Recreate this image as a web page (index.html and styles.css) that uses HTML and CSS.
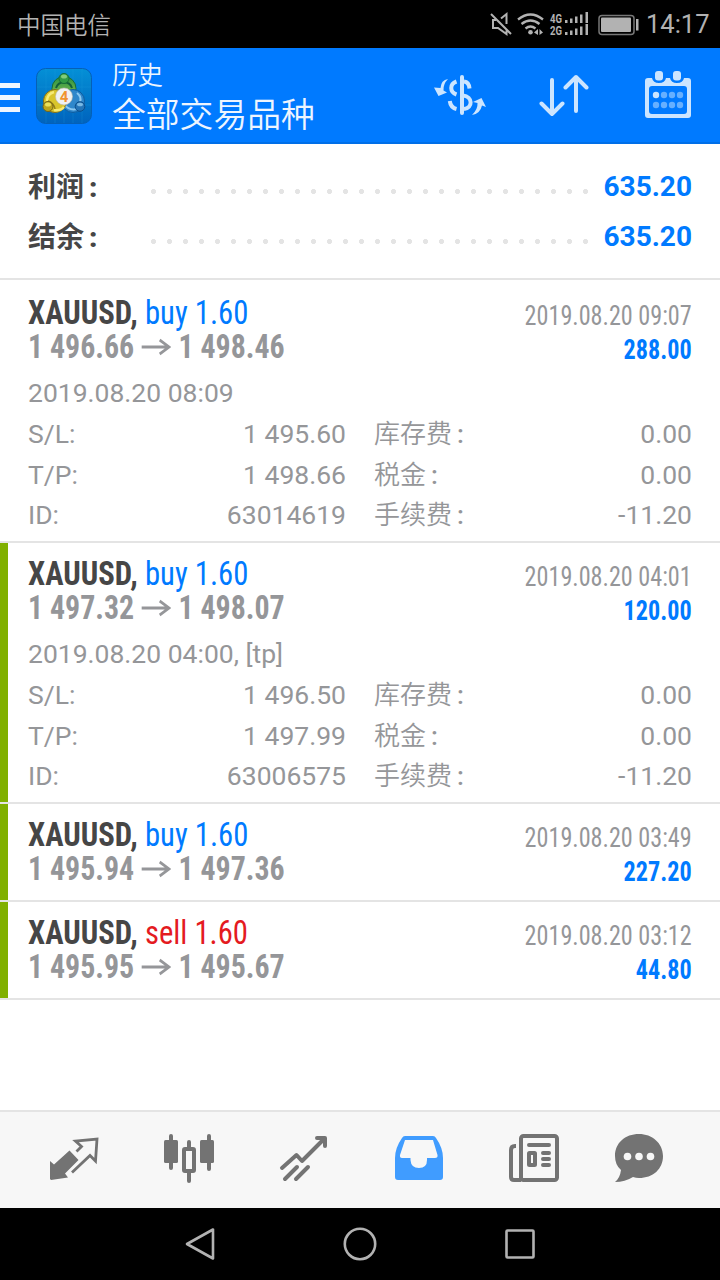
FILE: index.html
```html
<!DOCTYPE html>
<html lang="zh-CN">
<head>
    <meta charset="UTF-8">
    <meta name="viewport" content="width=device-width, initial-scale=1.0">
    <title>历史</title>
    <link rel="stylesheet" href="styles.css">
</head>
<body>
    <svg class="sprite" width="0" height="0">
        <symbol id="arrow" viewBox="0 0 32 18">
            <path d="M0 9H30.500M20 2L30.500 9L20 16" fill="none" stroke="currentColor" stroke-width="2.800"/>
        </symbol>
    </svg>

    <div class="status-bar">
        <span class="carrier">中国电信</span>
        <div class="status-icons">
            <svg width="150" height="48" viewBox="490 0 150 48">
                <!-- muted speaker -->
                <g fill="none" stroke="#b2b2b2" stroke-width="2">
                    <path d="M491 14L511 34M501 18.500L506.500 14V24M496 20H493V28H498L506.500 34V30.500"/>
                </g>
                <!-- wifi -->
                <g fill="none" stroke="#b2b2b2" stroke-width="2.300">
                    <path d="M518 19.500Q530.500 9.500 543 19.500M521.500 24Q530.500 17 539.500 24M525.500 28.500Q530.500 24.500 535.500 28.500"/>
                </g>
                <circle cx="530.500" cy="32.200" r="2.300" fill="#b2b2b2"/>
                <path d="M534 32.500L538 29V35ZM543 32.500L539.500 29V35Z" fill="#b2b2b2"/>
                <text class="net" x="550" y="22.800" textLength="12" lengthAdjust="spacingAndGlyphs">4G</text>
                <text class="net" x="550" y="35" textLength="12" lengthAdjust="spacingAndGlyphs">2G</text>
                <!-- signal levels -->
                <g fill="#b2b2b2">
                    <path d="M565 20h2.500v3h-2.500zM570 18.500h2.500v4.500h-2.500zM575 16.500h2.500v6.500h-2.500zM580 14.500h2.500v8.500h-2.500zM585.500 12h2.500v11h-2.500z"/>
                    <path d="M565 32h2.500v3h-2.500zM570 30.500h2.500v4.500h-2.500zM575 28.500h2.500v6.500h-2.500zM580 26.500h2.500v8.500h-2.500zM585.500 24h2.500v11h-2.500z"/>
                </g>
                <!-- battery -->
                <rect x="599" y="15.500" width="35" height="19" rx="3" fill="none" stroke="#777" stroke-width="1.500"/>
                <rect x="601" y="17.500" width="30" height="14.500" rx="1" fill="#b2b2b2"/>
                <path d="M636 19h2.500v11.500h-2.500z" fill="#b2b2b2"/>
            </svg>
            <span class="clock">14:17</span>
        </div>
    </div>

    <header class="app-bar">
        <svg class="menu-icon" width="20" height="29" viewBox="0 0 20 29">
            <path d="M0 2.500H20M0 14.500H20M0 26.500H20" stroke="#edf5ff" stroke-width="5"/>
        </svg>
        <svg class="logo" width="56" height="56" viewBox="0 0 56 56">
            <defs>
                <linearGradient id="tile" x1="0" y1="0" x2="0" y2="1">
                    <stop offset="0" stop-color="#0490d6"/>
                    <stop offset="1" stop-color="#0063bd"/>
                </linearGradient>
                <linearGradient id="green" x1="0" y1="0" x2="0" y2="1">
                    <stop offset="0" stop-color="#2c9140"/>
                    <stop offset="1" stop-color="#8cc653"/>
                </linearGradient>
            </defs>
            <rect x="0.500" y="0.500" width="55" height="55" rx="9" fill="url(#tile)" stroke="#0560b6"/>
            <path d="M10 1V55M19 1V55M28 1V55M37 1V55M46 1V55M1 19H55M1 37H55" stroke="#1c9ddd" stroke-width="0.500" opacity="0.500"/>
            <circle cx="28" cy="20.500" r="12" fill="url(#green)" stroke="#166b38"/>
            <path d="M20 20A8.500 8.500 0 0 1 36 20" fill="none" stroke="#12603a" stroke-width="2"/>
            <circle cx="37" cy="33" r="11.500" fill="#2f87cb" stroke="#0c5ca0"/>
            <path d="M41 25Q46 29 44 34M28 36Q33 43 41 41" fill="none" stroke="#8cc8f0" stroke-width="2"/>
            <circle cx="19" cy="33" r="11.500" fill="#d9c52b" stroke="#806b19"/>
            <path d="M11 33Q11 26 18 24M18 42Q25 43 28 39" fill="none" stroke="#f6ea74" stroke-width="2.500"/>
            <path d="M12 33Q18 35 19 41" fill="none" stroke="#94801a" stroke-width="1.500"/>
            <circle cx="28" cy="10.500" r="5" fill="#319b45" stroke="#176d36"/>
            <ellipse cx="28" cy="8.500" rx="3" ry="2" fill="#82cc79"/>
            <circle cx="12" cy="38.500" r="5" fill="#bda61c" stroke="#76651a"/>
            <ellipse cx="12" cy="36.500" rx="3" ry="2" fill="#ece15b"/>
            <circle cx="44" cy="38.500" r="4.800" fill="#2575b8" stroke="#0b4d8a"/>
            <ellipse cx="44" cy="36.500" rx="3" ry="1.800" fill="#79b9e4"/>
            <circle cx="28" cy="28.500" r="8.500" fill="#f0f1f1" stroke="#b9b9b0" stroke-width="0.600"/>
            <text class="logo-digit" x="28" y="34" text-anchor="middle">4</text>
        </svg>
        <div class="titles">
            <div class="title">历史</div>
            <div class="subtitle">全部交易品种</div>
        </div>
        <div class="actions">
            <svg width="54" height="44" viewBox="433 73 54 44">
                <g fill="none" stroke="#cce5ff">
                    <path d="M462 77V113" stroke-width="4" stroke-linecap="round"/>
                    <path d="M464 81.500Q469 82 469.500 88.500M463 95.500C473 96.500 473 108 464 109" stroke-width="4"/>
                    <path d="M456.500 81.500C449.500 84 449.500 92 456.500 94.500M449.800 101Q450.500 107.500 456.500 109" stroke-width="4"/>
                </g>
                <path d="M448 79Q441 80 440.500 88L434 87.500L438.500 96L447 92.500L443.500 90.500Q443 84 448 79Z" fill="#cce5ff"/>
                <path d="M472 115Q478 109 477.500 103L473 102L481.500 98L486 107L482 105.500Q480 114 472 115Z" fill="#cce5ff"/>
            </svg>
            <svg class="sort-icon" width="50" height="44" viewBox="539 73 50 44">
                <path d="M552 80V114M541.500 103.500L552 114L562.500 103.500M576 111V77M565.500 87.500L576 77L586.500 87.500" fill="none" stroke="#cce5ff" stroke-width="4" stroke-linecap="round" stroke-linejoin="round"/>
            </svg>
            <svg width="46" height="48" viewBox="645 71 46 48">
                <path d="M648 78H652Q653 83 659 83Q665 83 666 78H670Q671 83 677 83Q683 83 684 78H688Q691 78 691 81V115Q691 118 688 118H648Q645 118 645 115V81Q645 78 648 78ZM652 86Q649 86 649 89V111Q649 114 652 114H684Q687 114 687 111V89Q687 86 684 86Z" fill="#cce5ff" fill-rule="evenodd"/>
                <rect x="655" y="71" width="8" height="9.500" rx="3" fill="#cce5ff"/>
                <rect x="673" y="71" width="8" height="9.500" rx="3" fill="#cce5ff"/>
                <circle cx="656" cy="95" r="3.200" fill="#cce5ff"/>
                <g fill="#66b0ff">
                    <circle cx="664" cy="95" r="3.200"/>
                    <circle cx="672" cy="95" r="3.200"/>
                    <circle cx="680" cy="95" r="3.200"/>
                    <circle cx="656" cy="105" r="3.200"/>
                    <circle cx="664" cy="105" r="3.200"/>
                    <circle cx="672" cy="105" r="3.200"/>
                    <circle cx="680" cy="105" r="3.200"/>
                </g>
            </svg>
        </div>
    </header>

    <section class="summary">
        <div class="summary-row">
            <span class="summary-label">利润<i>:</i></span>
            <span class="dots"></span>
            <span class="summary-value">635.20</span>
        </div>
        <div class="summary-row">
            <span class="summary-label">结余<i>:</i></span>
            <span class="dots"></span>
            <span class="summary-value">635.20</span>
        </div>
    </section>

    <main class="deals">
        <article class="deal">
            <div class="deal-head">
                <div class="deal-left">
                    <div class="symbol">XAUUSD, <span class="buy">buy 1.60</span></div>
                    <div class="prices">1 496.66<svg class="arrow"><use href="#arrow"/></svg>1 498.46</div>
                </div>
                <div class="deal-right">
                    <div class="close-time">2019.08.20 09:07</div>
                    <div class="profit">288.00</div>
                </div>
            </div>
            <div class="open-time">2019.08.20 08:09</div>
            <div class="details">
                <span>S/L:</span><span class="num">1 495.60</span><span class="cn">库存费<i>:</i></span><span class="num">0.00</span>
                <span>T/P:</span><span class="num">1 498.66</span><span class="cn">税金<i>:</i></span><span class="num">0.00</span>
                <span>ID:</span><span class="num">63014619</span><span class="cn">手续费<i>:</i></span><span class="num">-11.20</span>
            </div>
        </article>

        <article class="deal tp">
            <div class="deal-head">
                <div class="deal-left">
                    <div class="symbol">XAUUSD, <span class="buy">buy 1.60</span></div>
                    <div class="prices">1 497.32<svg class="arrow"><use href="#arrow"/></svg>1 498.07</div>
                </div>
                <div class="deal-right">
                    <div class="close-time">2019.08.20 04:01</div>
                    <div class="profit">120.00</div>
                </div>
            </div>
            <div class="open-time">2019.08.20 04:00, [tp]</div>
            <div class="details">
                <span>S/L:</span><span class="num">1 496.50</span><span class="cn">库存费<i>:</i></span><span class="num">0.00</span>
                <span>T/P:</span><span class="num">1 497.99</span><span class="cn">税金<i>:</i></span><span class="num">0.00</span>
                <span>ID:</span><span class="num">63006575</span><span class="cn">手续费<i>:</i></span><span class="num">-11.20</span>
            </div>
        </article>

        <article class="deal tp">
            <div class="deal-head">
                <div class="deal-left">
                    <div class="symbol">XAUUSD, <span class="buy">buy 1.60</span></div>
                    <div class="prices">1 495.94<svg class="arrow"><use href="#arrow"/></svg>1 497.36</div>
                </div>
                <div class="deal-right">
                    <div class="close-time">2019.08.20 03:49</div>
                    <div class="profit">227.20</div>
                </div>
            </div>
        </article>

        <article class="deal tp">
            <div class="deal-head">
                <div class="deal-left">
                    <div class="symbol">XAUUSD, <span class="sell">sell 1.60</span></div>
                    <div class="prices">1 495.95<svg class="arrow"><use href="#arrow"/></svg>1 495.67</div>
                </div>
                <div class="deal-right">
                    <div class="close-time">2019.08.20 03:12</div>
                    <div class="profit">44.80</div>
                </div>
            </div>
        </article>
    </main>

    <nav class="tabs">
        <!-- quotes -->
        <svg width="50" height="50" viewBox="49 1133 50 50">
            <path d="M69.500 1150.500L78.500 1160L65 1173.500L68 1177.500L51 1180L50 1179V1161L54 1164.500Z" fill="#737373"/>
            <path d="M76.500 1151.500L81.500 1146.500L75.500 1141L97 1139L95.500 1161L90 1155.500L72 1172.500" fill="none" stroke="#737373" stroke-width="2.800"/>
        </svg>
        <!-- charts -->
        <svg width="50" height="50" viewBox="164 1133 50 50">
            <path d="M171 1136V1168M209 1136V1169M189 1142V1148M189 1172V1181" stroke="#737373" stroke-width="4" stroke-linecap="round"/>
            <rect x="164" y="1140" width="14" height="23" rx="1.500" fill="#737373"/>
            <rect x="200" y="1140" width="14" height="23" rx="1.500" fill="#737373"/>
            <rect x="184" y="1149" width="10" height="22" rx="1" fill="none" stroke="#737373" stroke-width="4"/>
        </svg>
        <!-- trade -->
        <svg width="50" height="50" viewBox="279 1133 50 50">
            <g fill="none" stroke="#737373" stroke-width="4" stroke-linecap="round" stroke-linejoin="round">
                <path d="M282 1168L296.500 1155L302 1161L324 1139M317 1138H325V1146M285 1179L297 1167M296 1179L308 1167"/>
            </g>
        </svg>
        <!-- history -->
        <svg width="50" height="50" viewBox="394 1133 50 50">
            <path d="M405 1136H433Q435 1136 436 1138Q443 1148 443 1158V1177Q443 1180 440 1180H398Q395 1180 395 1177V1158Q395 1148 402 1138Q403 1136 405 1136ZM405 1140L400 1155Q399.500 1158 402 1158H410.500V1160Q411 1168 419 1168Q427 1168 427 1160V1158H435Q438 1158 437.500 1155L433 1140Z" fill="#409cff" fill-rule="evenodd"/>
        </svg>
        <!-- news -->
        <svg width="50" height="50" viewBox="509 1133 50 50">
            <g fill="none" stroke="#737373" stroke-width="4" stroke-linecap="round">
                <rect x="521" y="1136" width="36" height="44" rx="2.500"/>
                <path d="M516 1146H515Q511 1146 511 1150V1177Q511 1180 514 1180H521" stroke-linecap="butt"/>
                <path d="M529 1145H549M543 1153H549M543 1159H549M543 1165H549"/>
                <rect x="529" y="1153" width="6" height="12" rx="0.500"/>
            </g>
        </svg>
        <!-- chat -->
        <svg width="50" height="50" viewBox="614 1133 50 50">
            <path d="M639 1134C652 1134 663 1143 663 1156C663 1169 653 1178 639 1178Q636 1178 633 1177Q625 1182 615 1182Q620 1178 621 1170Q615 1165 615 1156C615 1143 625 1134 639 1134Z" fill="#737373"/>
            <g fill="#f7f7f7">
                <circle cx="627.500" cy="1156.500" r="3.800"/>
                <circle cx="639" cy="1156.500" r="3.800"/>
                <circle cx="650.500" cy="1156.500" r="3.800"/>
            </g>
        </svg>
    </nav>

    <div class="nav-bar">
        <svg width="36" height="36" viewBox="182 1226 36 36">
            <path d="M213 1229.500V1258.500L187 1244Z"/>
        </svg>
        <svg width="36" height="36" viewBox="342 1226 36 36">
            <circle cx="360" cy="1244" r="15.200"/>
        </svg>
        <svg width="36" height="36" viewBox="502 1226 36 36">
            <rect x="506.500" y="1230.500" width="27" height="27" rx="1"/>
        </svg>
    </div>
</body>
</html>
```
FILE: styles.css
```css
* {
    box-sizing: border-box;
}

body {
    margin: 0;
    width: 720px;
    height: 1280px;
    display: flex;
    flex-direction: column;
    overflow: hidden;
    background: #fff;
    color: #959699;
    font-family: Roboto, "Noto Sans CJK SC", sans-serif;
}

svg {
    display: block;
    flex: none;
}

i {
    font-style: normal;
    font-weight: 500;
    margin-left: 5px;
}

.sprite {
    position: absolute;
}

/* Status bar */
.status-bar {
    height: 48px;
    padding: 0 15px 0 17px;
    display: flex;
    align-items: center;
    justify-content: space-between;
    background: #000;
    color: #b2b2b2;
}

.carrier {
    font-size: 23.5px;
    font-weight: 350;
}

.status-icons {
    display: flex;
    align-items: center;
    gap: 6px;
}

.clock {
    font-size: 25.5px;
    line-height: 50px;
    width: 59px;
    white-space: nowrap;
}

.net {
    font: bold 13px Roboto, sans-serif;
    fill: #b2b2b2;
}

/* App bar */
.app-bar {
    height: 96px;
    display: flex;
    align-items: center;
    background: #007aff;
    border-bottom: 2px solid #006fe8;
    color: #edf5ff;
}

.menu-icon {
    margin-top: 4px;
}

.logo {
    margin: 2px 0 0 16px;
}

.logo-digit {
    font: bold 15px Roboto, sans-serif;
    fill: #f0932e;
}

.titles {
    margin: 5px 0 0 20px;
    font-weight: 350;
}

.title {
    font-size: 25.5px;
    line-height: 36px;
}

.subtitle {
    font-size: 33.8px;
    line-height: 46px;
}

.actions {
    margin-left: auto;
    padding: 0 29px 0 0;
    display: flex;
    align-items: center;
    gap: 54px;
}

.sort-icon {
    margin: 0 2px 0 -2px;
}

/* Totals */
.summary {
    height: 136px;
    padding: 18px 28px 0;
    border-bottom: 2px solid #e4e4e4;
}

.summary-row {
    height: 50px;
    display: flex;
    align-items: flex-start;
    font-size: 28px;
    font-weight: bold;
    line-height: 50px;
}

.summary-label {
    width: 118px;
    padding-top: 1px;
    color: #464646;
}

.summary-label i {
    font-weight: 900;
}

.dots {
    width: 448px;
    height: 16px;
    margin-top: 21px;
    background: radial-gradient(circle at 7.5px 8.5px, #e4e4e4 2.2px, transparent 2.9px);
    background-size: 16px 16px;
}

.summary-value {
    margin-left: auto;
    color: #007aff;
}

/* Deals */
.deals {
    flex: 1;
    padding-top: 2px;
}

.deal {
    padding: 14px 28px 11px;
    border-bottom: 2px solid #e4e4e4;
}

.deal.tp {
    background: linear-gradient(#80b000, #80b000) no-repeat 0 0 / 8px 100%;
    background-clip: padding-box;
}

.deal-head {
    height: 71px;
    display: flex;
    justify-content: space-between;
    font-family: "Roboto Condensed", Roboto, sans-serif;
    font-stretch: 75%;
    white-space: nowrap;
}

.symbol {
    height: 34px;
    font-size: 33px;
    line-height: 33px;
    font-weight: bold;
    color: #464646;
    transform: scaleX(0.93);
    transform-origin: left;
}

.symbol span {
    font-weight: normal;
}

.buy {
    color: #007aff;
}

.sell {
    color: #e41b1f;
}

.prices {
    display: flex;
    align-items: center;
    font-size: 33px;
    line-height: 34px;
    font-weight: bold;
    transform: scaleX(0.905);
    transform-origin: left;
}

.arrow {
    width: 33px;
    height: 18px;
    margin: 0 8px;
}

.deal-right {
    padding-top: 3px;
    text-align: right;
    font-size: 27px;
    line-height: 34px;
    transform: scaleX(0.895);
    transform-origin: right;
}

.profit {
    font-weight: bold;
    color: #007aff;
}

.open-time {
    height: 51px;
    padding-top: 3px;
    font-size: 26.5px;
    line-height: 45px;
}

.details {
    display: grid;
    grid-template-columns: 78px 240px 120px 226px;
    grid-auto-rows: 40.5px;
    margin-bottom: -9.5px;
    font-size: 26.5px;
    line-height: 32px;
}

.num {
    text-align: right;
}

.cn {
    padding-left: 28px;
    font-size: 26px;
    font-weight: 350;
    white-space: nowrap;
}

/* Bottom tabs */
.tabs {
    height: 98px;
    padding: 0 0 4px 16px;
    display: grid;
    grid-template-columns: repeat(5, 115px) 96px;
    align-items: center;
    justify-items: center;
    background: #f7f7f7;
    border-top: 2px solid #e4e4e4;
}

/* System navigation */
.nav-bar {
    height: 72px;
    display: flex;
    align-items: center;
    justify-content: center;
    gap: 124px;
    background: #000;
}

.nav-bar svg {
    fill: none;
    stroke: #b2b2b2;
    stroke-width: 2.6;
    stroke-linejoin: round;
}
```
